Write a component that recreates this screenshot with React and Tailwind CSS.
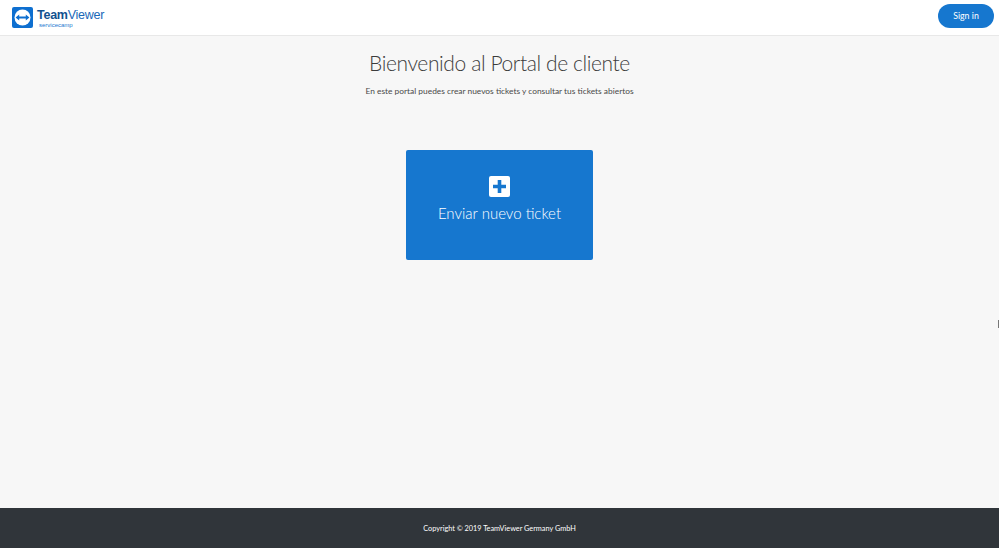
export default function App() {
  return (
    <div className="relative flex h-[548px] w-[999px] flex-col overflow-hidden bg-[#f7f7f7] font-['Lato',sans-serif]">
      <header className="flex h-[36px] items-center justify-between border-b border-[#e8e8e8] bg-white pl-3 pr-[5px]">
        <div className="flex items-center gap-1">
          <svg width="21" height="21" viewBox="0 0 21 21" className="shrink-0">
            <rect width="21" height="21" rx="2" fill="#0e6fd0" />
            <circle cx="10.5" cy="10.5" r="8" fill="#fff" />
            <path d="M3.6 10.5l3.6-3v2h6.6v-2l3.6 3-3.6 3v-2H7.2v2z" fill="#0e6fd0" />
          </svg>
          <div className="flex flex-col pt-[1px]">
            <div className="font-['Liberation_Sans',sans-serif] text-[12.5px] leading-[13px] tracking-[-0.25px] text-[#1a68b8]">
              <span className="font-bold text-[#12518f]">Team</span>Viewer
            </div>
            <div className="ml-[2px] font-['Liberation_Sans',sans-serif] text-[6px] leading-[6px] text-[#1a78d0]">servicecamp</div>
          </div>
        </div>
        <button className="h-6 w-14 -translate-y-[2px] rounded-full bg-[#1677cf] text-[8.8px] text-white">Sign in</button>
      </header>
      <main className="flex flex-1 flex-col items-center">
        <h1 className="mt-[12px] text-[21px] leading-[30px] font-light tracking-[-0.4px] text-[#3c3c3c]">Bienvenido al Portal de cliente</h1>
        <p className="mt-[6px] text-[8.4px] leading-[14px] text-[#4a4a4a]">En este portal puedes crear nuevos tickets y consultar tus tickets abiertos</p>
        <button className="mt-[52px] flex h-[110px] w-[187px] flex-col items-center rounded-[2px] bg-[#1677cf] pt-[26px] text-white">
          <span className="flex h-[21px] w-[21px] items-center justify-center rounded-[2px] bg-white">
            <svg width="15" height="15" viewBox="0 0 15 15">
              <path d="M5.7 1h3.6v4.7H14v3.6H9.3V14H5.7V9.3H1V5.7h4.7z" fill="#1677cf" />
            </svg>
          </span>
          <span className="mt-[6px] text-[15px] leading-[20px] font-light">Enviar nuevo ticket</span>
        </button>
      </main>
      <footer className="flex h-10 items-center justify-center bg-[#30353a] pt-[2px] text-[7.3px] text-white">
        Copyright © 2019 TeamViewer Germany GmbH
      </footer>
      <div className="absolute right-0 top-[320px] h-2 w-px bg-[#777]" />
    </div>
  );
}
